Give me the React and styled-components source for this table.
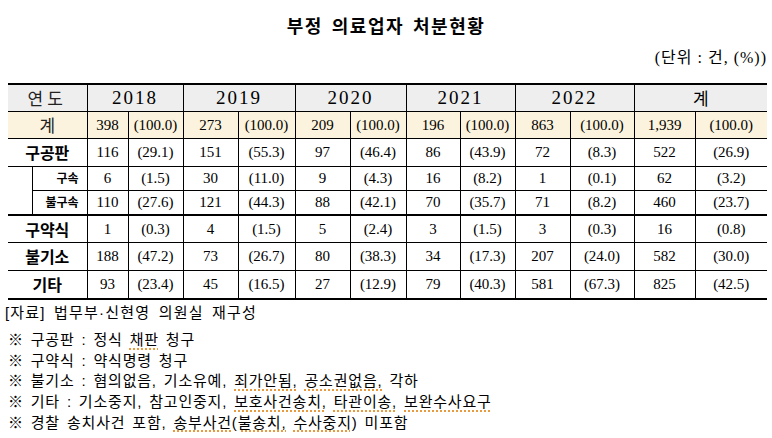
import { createGlobalStyle } from "styled-components";
import styled from "styled-components";

const GlobalStyle = createGlobalStyle`
    html, body {
        margin: 0;
        padding: 0;
        background: #ffffff;
    }
`;

const years = ["2018", "2019", "2020", "2021", "2022", "계"];
const colWidths = [41, 55, 55, 57, 55, 56, 54, 55, 55, 64, 61, 72];

const rows = [
    { label: "구공판", h: 28, values: [116, "(29.1)", 151, "(55.3)", 97, "(46.4)", 86, "(43.9)", 72, "(8.3)", 522, "(26.9)"] },
    { label: "구속", h: 24, sub: true, first: true, values: [6, "(1.5)", 30, "(11.0)", 9, "(4.3)", 16, "(8.2)", 1, "(0.1)", 62, "(3.2)"] },
    { label: "불구속", h: 25, sub: true, values: [110, "(27.6)", 121, "(44.3)", 88, "(42.1)", 70, "(35.7)", 71, "(8.2)", 460, "(23.7)"] },
    { label: "구약식", h: 27, thick: true, values: [1, "(0.3)", 4, "(1.5)", 5, "(2.4)", 3, "(1.5)", 3, "(0.3)", 16, "(0.8)"] },
    { label: "불기소", h: 28, values: [188, "(47.2)", 73, "(26.7)", 80, "(38.3)", 34, "(17.3)", 207, "(24.0)", 582, "(30.0)"] },
    { label: "기타", h: 29, values: [93, "(23.4)", 45, "(16.5)", 27, "(12.9)", 79, "(40.3)", 581, "(67.3)", 825, "(42.5)"] },
];

const totals = [398, "(100.0)", 273, "(100.0)", 209, "(100.0)", 196, "(100.0)", 863, "(100.0)", "1,939", "(100.0)"];

const App = () => {
    return (
        <Page>
            <GlobalStyle />
            <Title>부정 의료업자 처분현황</Title>
            <Unit>(단위 : 건, (%))</Unit>
            <Table>
                <colgroup>
                    <col style={{ width: 24 }} />
                    <col style={{ width: 55 }} />
                    {colWidths.map((w, i) => (
                        <col key={i} style={{ width: w }} />
                    ))}
                </colgroup>
                <tbody>
                    <Row $h={27} $bg="#eeeeee">
                        <HeadCell colSpan={2} $spaced>연도</HeadCell>
                        {years.map((y) => (
                            <YearCell key={y} colSpan={2} $kr={y === "계"}>{y}</YearCell>
                        ))}
                    </Row>
                    <Row $h={27} $bg="#fbf3dd">
                        <HeadCell colSpan={2}>계</HeadCell>
                        {totals.map((v, i) => (
                            <Num key={i}>{v}</Num>
                        ))}
                    </Row>
                    {rows.map((r) => (
                        <Row key={r.label} $h={r.h} $thick={r.thick}>
                            {r.first && <Indent rowSpan={2} />}
                            {r.sub ? (
                                <SubLabel>{r.label}</SubLabel>
                            ) : (
                                <Label colSpan={2}>{r.label}</Label>
                            )}
                            {r.values.map((v, i) => (
                                <Num key={i}>{v}</Num>
                            ))}
                        </Row>
                    ))}
                </tbody>
            </Table>
            <Source>[자료] 법무부·신현영 의원실 재구성</Source>
            <Notes>
                <Note>※ 구공판 : 정식 <Marked>채판</Marked> 청구</Note>
                <Note>※ 구약식 : 약식명령 청구</Note>
                <Note>※ 불기소 : 혐의없음, 기소유예, <Marked>죄가안됨,</Marked> <Marked>공소권없음,</Marked> 각하</Note>
                <Note>※ 기타 : 기소중지, 참고인중지, <Marked>보호사건송치,</Marked> <Marked>타관이송,</Marked> <Marked>보완수사요구</Marked></Note>
                <Note>※ 경찰 송치사건 포함, <Marked>송부사건(불송치,</Marked> <Marked>수사중지)</Marked> 미포함</Note>
            </Notes>
        </Page>
    );
};

const Page = styled.div`
    width: 772px;
    padding: 15px 5px 0 5px;
    box-sizing: border-box;
    color: #000;
    font-family: "Liberation Serif", "Noto Sans CJK KR", serif;
`;

const Title = styled.h1`
    margin: 0;
    text-align: center;
    font-size: 18px;
    font-weight: bold;
    line-height: 24px;
    letter-spacing: 1.5px;
    word-spacing: 3px;
`;

const Unit = styled.div`
    margin-top: 9px;
    text-align: right;
    font-size: 16px;
    line-height: 20px;
    letter-spacing: 1px;
`;

const Table = styled.table`
    margin: 15px 0 0 3px;
    width: 759px;
    table-layout: fixed;
    border-collapse: collapse;
    border-top: 2px solid #000;
    border-bottom: 2px solid #000;
    border-left: hidden;
    border-right: hidden;
`;

const Row = styled.tr`
    height: ${(p) => p.$h}px;
    background: ${(p) => p.$bg || "transparent"};

    & > td {
        border-top: ${(p) => (p.$thick ? "2px" : "1px")} solid #000;
    }
`;

const Cell = styled.td`
    border: 1px solid #000;
    padding: 0;
    text-align: center;
    vertical-align: middle;
    white-space: nowrap;
    overflow: hidden;
`;

const HeadCell = styled(Cell)`
    font-family: "Noto Sans CJK KR", sans-serif;
    font-size: 17px;
    line-height: 20px;
    color: #222;
    letter-spacing: ${(p) => (p.$spaced ? "4px" : "0")};
`;

const YearCell = styled(Cell)`
    font-family: ${(p) => (p.$kr ? '"Noto Sans CJK KR", sans-serif' : '"Liberation Serif", serif')};
    font-size: ${(p) => (p.$kr ? "17px" : "19px")};
    letter-spacing: ${(p) => (p.$kr ? "0" : "2px")};
    line-height: 20px;
`;

const Label = styled(Cell)`
    font-family: "Noto Sans CJK KR", sans-serif;
    font-weight: bold;
    font-size: 16px;
    line-height: 20px;
`;

const SubLabel = styled(Cell)`
    font-family: "Noto Sans CJK KR", sans-serif;
    font-weight: bold;
    font-size: 12px;
    line-height: 16px;
    text-align: right;
    padding-right: 8px;
`;

const Indent = styled(Cell)``;

const Num = styled(Cell)`
    font-family: "Liberation Serif", serif;
    font-size: 15px;
    line-height: 18px;
`;

const Source = styled.div`
    margin-top: 3px;
    font-family: "Liberation Sans", "Noto Sans CJK KR", sans-serif;
    font-size: 15px;
    line-height: 20px;
    letter-spacing: 1.2px;
    word-spacing: 3px;
`;

const Notes = styled.div`
    margin-top: 7px;
    padding-left: 3px;
    display: flex;
    flex-direction: column;
`;

const Note = styled.div`
    font-family: "Liberation Sans", "Noto Sans CJK KR", sans-serif;
    font-size: 15px;
    line-height: 20.7px;
    letter-spacing: 0.8px;
    word-spacing: 2px;
    white-space: nowrap;
`;

const Marked = styled.span`
    text-decoration: underline dotted #e89a3c;
    text-decoration-thickness: 2px;
    text-underline-offset: 3px;
`;

export default App;
